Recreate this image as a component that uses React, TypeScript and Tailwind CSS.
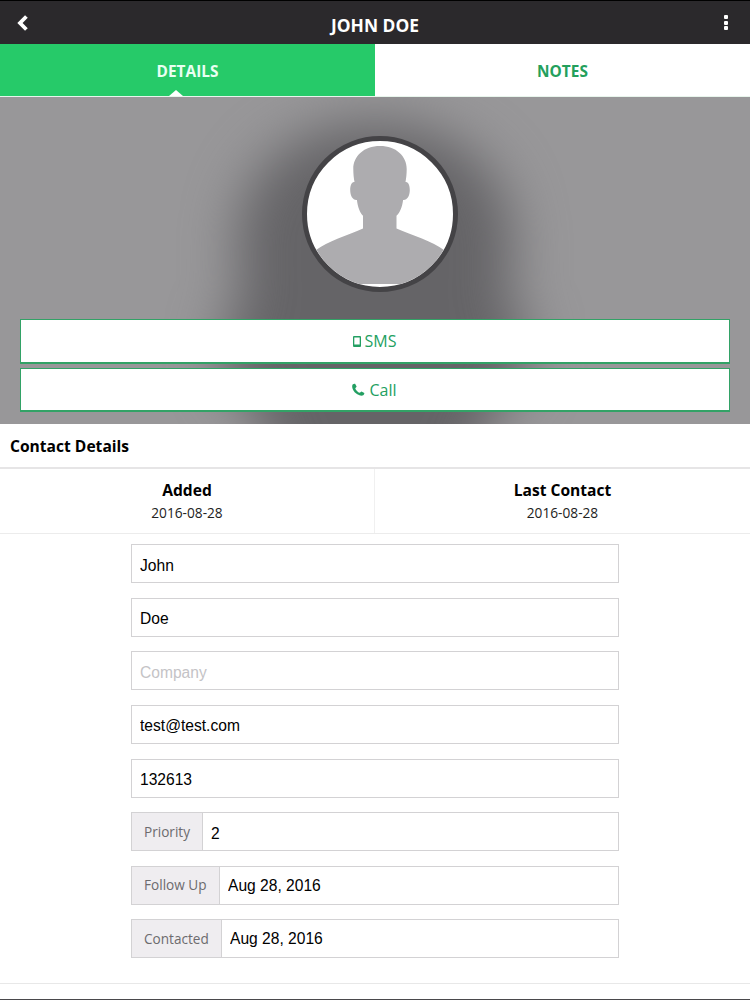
const silhouettePath =
  'M73 5 C57 5 46.3 15 46.3 28 C46.3 33 46.8 37 47.5 41 C44.6 40.4 43.2 44.5 43.2 49 C43.2 55 46 59.5 49.9 59 C50.8 66 52.8 71.5 56 74.7 L56 87.6 C41 94 20 101 9 109 C4 113 1 125 0 143 L146 143 C145 125 142 113 137 109 C126 101 105 94 89.5 87.6 L89.5 74.7 C93 71.5 95.2 66 96.1 59 C100 59.5 102.8 55 102.8 49 C102.8 44.5 101.4 40.4 98.5 41 C99.2 37 99.7 33 99.7 28 C99.7 15 89 5 73 5 Z';

const textFields = [
  { name: 'firstName', placeholder: 'First Name', value: 'John' },
  { name: 'lastName', placeholder: 'Last Name', value: 'Doe' },
  { name: 'company', placeholder: 'Company', value: '' },
  { name: 'email', placeholder: 'Email', value: 'test@test.com' },
  { name: 'phone', placeholder: 'Phone', value: '132613' },
];

const labelledFields = [
  { name: 'priority', label: 'Priority', value: '2', labelClass: 'w-[71px]', inputClass: 'pt-1' },
  { name: 'followUp', label: 'Follow Up', value: 'Aug 28, 2016', labelClass: 'w-[88px]', inputClass: '' },
  { name: 'contacted', label: 'Contacted', value: 'Aug 28, 2016', labelClass: 'w-[90px]', inputClass: '' },
];

const stats = [
  { label: 'Added', value: '2016-08-28' },
  { label: 'Last Contact', value: '2016-08-28' },
];

function Header() {
  return (
    <header className="grid h-11 grid-cols-[1fr_auto_1fr] border-t border-black bg-[#2b292c] text-white">
      <button type="button" aria-label="Back" className="mt-[14px] ml-[17px] h-4 w-[11px]">
        <svg width="11" height="16" viewBox="0 0 11 16" fill="none" stroke="currentColor" strokeWidth="3.8">
          <path d="M9.4 1.5 L3 8 L9.4 14.5" />
        </svg>
      </button>
      <h1 className="mt-3 text-[17.4px] leading-6 font-bold">JOHN DOE</h1>
      <button type="button" aria-label="More" className="mt-[14px] mr-[22px] flex h-[15px] flex-col justify-between justify-self-end">
        <span className="h-1 w-1 rounded-[1px] bg-white" />
        <span className="h-1 w-1 rounded-[1px] bg-white" />
        <span className="h-1 w-1 rounded-[1px] bg-white" />
      </button>
    </header>
  );
}

function Tabs() {
  return (
    <nav className="grid h-[53px] grid-cols-2 border-b border-[#e8f5ec] text-[15.4px] font-bold">
      <button type="button" className="relative bg-[#26ca69] pt-[3px] text-[#e9fff2]">
        DETAILS
        <svg className="absolute bottom-0 left-[169px]" width="14" height="6" viewBox="0 0 14 6">
          <path d="M0 6 L7 0 L14 6 Z" fill="#fff" />
        </svg>
      </button>
      <button type="button" className="bg-white pt-[3px] text-[#23a05c]">NOTES</button>
    </nav>
  );
}

function Hero() {
  return (
    <section className="relative flex h-[327px] flex-col overflow-hidden bg-[#989799] px-5 pt-[39px]">
      {/* blurred backdrop */}
      <svg className="absolute top-0 left-0 blur-[26px]" width="750" height="750" viewBox="0 0 146 146">
        <path d={silhouettePath} fill="#656467" />
      </svg>
      <div className="relative ml-[282px] h-[156px] w-[156px] overflow-hidden rounded-full border-[5px] border-[#444346] bg-white">
        <svg width="146" height="146" viewBox="0 0 146 146">
          <path d={silhouettePath} fill="#adacaf" />
        </svg>
      </div>
      <div className="relative mt-[27px] flex flex-col gap-1 text-base text-[#239f62]">
        <button type="button" className="flex h-[45px] items-center justify-center gap-1 border border-b-2 border-[#32a266] bg-white pr-px">
          <svg width="8" height="11" viewBox="0 0 8 11">
            <path fillRule="evenodd" d="M1 0 H7 Q8 0 8 1 V10 Q8 11 7 11 H1 Q0 11 0 10 V1 Q0 0 1 0 Z M1.3 1.6 V8.6 H6.7 V1.6 Z" fill="currentColor" />
          </svg>
          SMS
        </button>
        <button type="button" className="flex h-11 items-center justify-center gap-1 border border-b-2 border-[#32a266] bg-white pr-px">
          <svg width="13" height="13" viewBox="0 0 13 13" fill="currentColor">
            <path d="M0.6 1.6 C1.4 0.8 2.4 0.5 3.1 0.7 L4.6 3.5 C4.6 4.3 3.3 4.7 3.3 5.4 C3.7 7 6 9.3 7.6 9.7 C8.3 9.7 8.8 8.4 9.5 8.4 L12.3 9.9 C12.5 10.7 12.1 11.7 11.3 12.3 C9.6 13.2 7.6 12.7 5.3 11.3 C3.4 10.1 1.7 8.3 0.8 6.2 C0 4.4 0 2.8 0.6 1.6 Z" />
          </svg>
          Call
        </button>
      </div>
    </section>
  );
}

export default function App() {
  return (
    <div className="flex h-[1000px] w-[750px] flex-col overflow-hidden border-b border-[#4a494c] bg-white font-['Open_Sans','Noto_Sans',sans-serif] text-black">
      <Header />
      <Tabs />
      <Hero />

      <h2 className="h-[45px] border-b-2 border-[#e6e5e6] pl-2.5 text-[15.6px] leading-[45px] font-bold">Contact Details</h2>

      <div className="grid h-[65px] grid-cols-2 border-b border-[#ececec]">
        {stats.map((stat) => (
          <div key={stat.label} className="border-r border-[#f0f0f0] pt-2.5 text-center last:border-r-0">
            <div className="text-[15.6px] leading-[23px] font-bold">{stat.label}</div>
            <div className="text-[13.7px] leading-[22px] text-[#222]">{stat.value}</div>
          </div>
        ))}
      </div>

      {/* contact form */}
      <form className="ml-[131px] flex w-[488px] flex-col gap-[14.65px] pt-2.5 font-['Liberation_Sans',sans-serif] text-[15.6px]">
        {textFields.map((field) => (
          <input
            key={field.name}
            name={field.name}
            defaultValue={field.value}
            placeholder={field.placeholder}
            className="h-[39px] border border-[#d3d2d4] px-2 pt-1 placeholder:text-[#c4c3c6]"
          />
        ))}
        {labelledFields.map((field) => (
          <label key={field.name} className="flex h-[39px] border border-[#d3d2d4]">
            <span className={`flex items-center border-r border-[#d3d2d4] bg-[#efedf0] pl-3 font-['Open_Sans','Noto_Sans',sans-serif] text-[13.6px] text-[#6c6b6e] ${field.labelClass}`}>
              {field.label}
            </span>
            <input name={field.name} defaultValue={field.value} className={`min-w-0 flex-1 px-2 ${field.inputClass}`} />
          </label>
        ))}
      </form>

      <div className="mt-[25px] border-t border-[#e8e8e8]" />
    </div>
  );
}
